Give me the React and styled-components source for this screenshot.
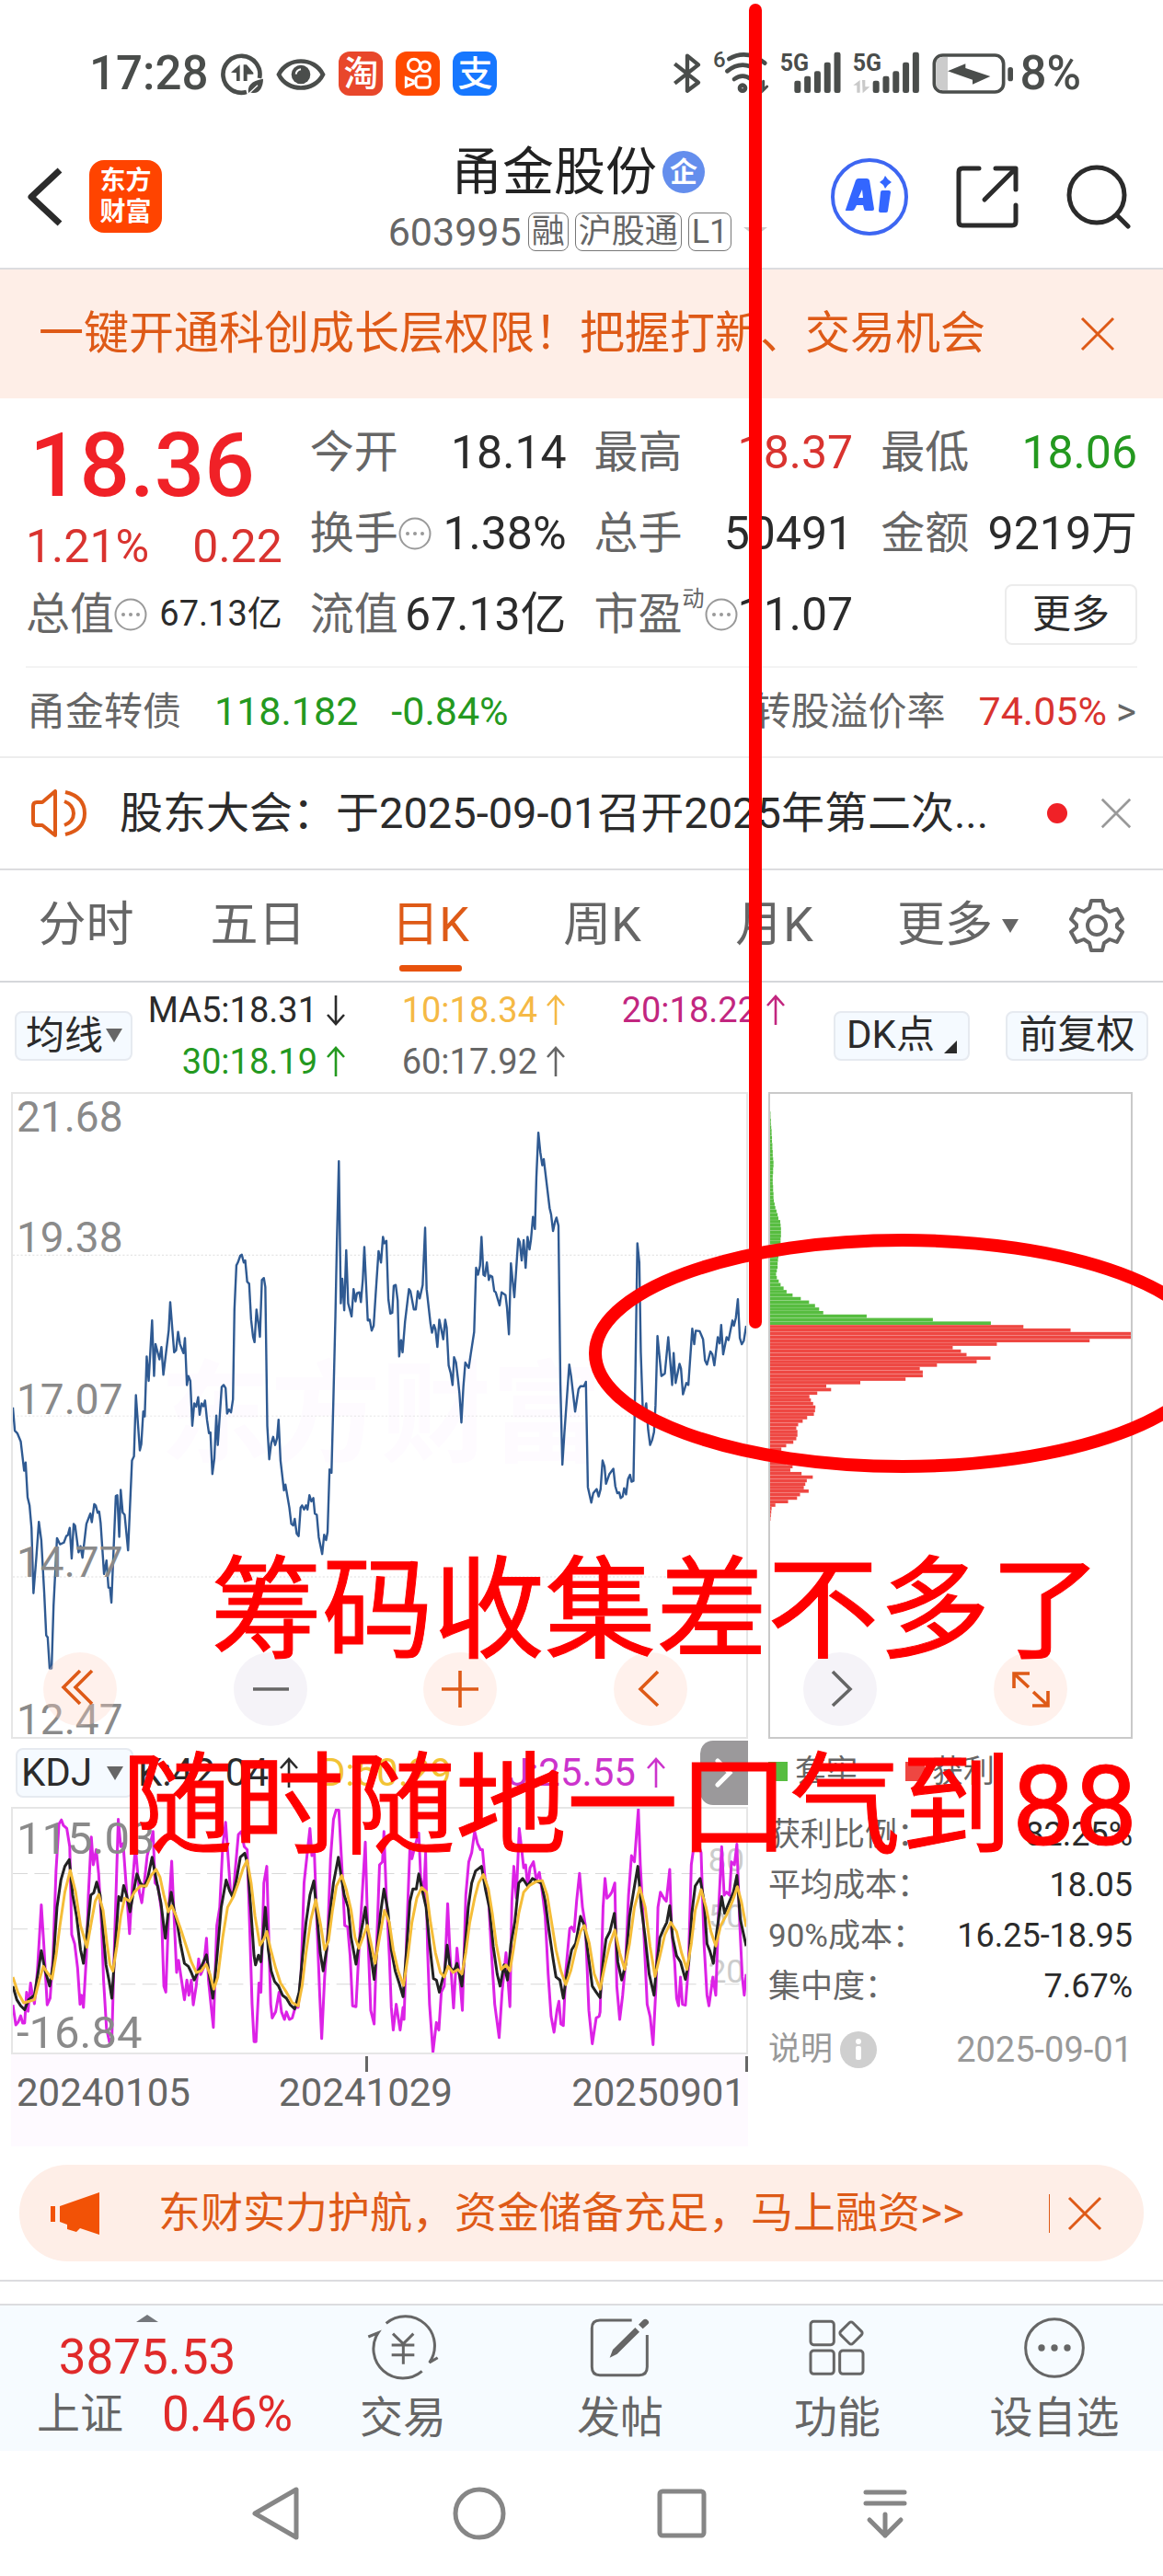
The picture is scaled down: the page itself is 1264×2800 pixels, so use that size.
import React from "react";
import styled, { createGlobalStyle } from "styled-components";

const INK = "#2b2b2b";
const GREY = "#666";
const RED = "#d9332f";
const BRIGHT_RED = "#f02127";
const GREEN = "#24991f";
const ORANGE = "#de5a17";
const LINE = "#dcdcdf";
const PEACH = "#feeee7";
const SANS = `Roboto, "Noto Sans CJK SC", sans-serif`;

const GlobalStyle = createGlobalStyle`
  * { box-sizing: border-box; }
  body { margin: 0; background: #fff; font-family: ${SANS}; line-height: 1.2; color: ${INK}; }
  button, select { font: inherit; color: inherit; border: 0; background: none; padding: 0; margin: 0; }
  a { color: inherit; text-decoration: none; }
  p, h1, dl, dd, dt { margin: 0; font-weight: 400; }
  svg { display: block; flex: none; }
`;

const Page = styled.div`
  position: relative;
  overflow: hidden;
  white-space: nowrap;
`;

/* ---------- status bar ---------- */
const StatusBar = styled.div`
  display: flex;
  align-items: center;
  justify-content: space-between;
  height: 112px;
  padding: 48px 89px 0 97px;
  color: #4a4d4b;
  font-size: 51px;
  font-weight: 500;
  line-height: 64px;
  svg { overflow: visible; }
`;
const StatusGroup = styled.div`
  display: flex;
  align-items: center;
  gap: ${(p) => p.$gap}px;
`;
const AppBadge = styled.span`
  display: grid;
  place-items: center;
  width: 48px;
  height: 48px;
  border-radius: 12px;
  background: ${(p) => p.$bg};
  color: #fff;
  font-size: 38px;
  line-height: 48px;
`;

/* ---------- header ---------- */
const Header = styled.header`
  display: grid;
  grid-template-columns: 1fr auto 1fr;
  align-items: center;
  height: 181px;
  padding: 24px 35px 0 27px;
  border-bottom: 2px solid ${LINE};
`;
const HeaderSide = styled.div`
  display: flex;
  align-items: center;
  justify-content: ${(p) => (p.$end ? "flex-end" : "flex-start")};
  gap: ${(p) => (p.$end ? 52 : 28)}px;
`;
const IconButton = styled.button`
  display: grid;
  place-items: center;
  flex: none;
`;
const BrandLogo = styled.a`
  width: 79px;
  height: 79px;
  padding: 6px 0;
  border-radius: 16px;
  background: #ff4400;
  color: #fff;
  font-size: 28px;
  font-weight: 700;
  line-height: 34px;
  text-align: center;
  white-space: normal;
`;
const Titles = styled.div`
  padding-top: 11px;
`;
const StockName = styled.h1`
  display: flex;
  align-items: center;
  justify-content: center;
  gap: 6px;
  font-size: 56px;
  line-height: 66px;
  color: #222;
`;
const Round = styled.span`
  display: grid;
  place-items: center;
  width: 46px;
  height: 46px;
  border-radius: 50%;
  background: ${(p) => p.$bg};
  color: #fff;
  font-size: 30px;
  font-weight: 700;
  line-height: 46px;
`;
const CodeRow = styled.div`
  display: flex;
  align-items: center;
  justify-content: center;
  gap: 7px;
  font-size: 43px;
  line-height: 64px;
  color: ${GREY};
  svg { margin-left: 6px; }
`;
const Tag = styled.span`
  padding: 0 3px;
  border: 1px solid #777;
  border-radius: 8px;
  font-size: 36px;
  line-height: 40px;
`;

/* ---------- banner ---------- */
const Banner = styled.section`
  display: flex;
  align-items: center;
  justify-content: space-between;
  height: 140px;
  padding: 0 52px 0 42px;
  background: ${PEACH};
  color: ${ORANGE};
  font-size: 49px;
`;

/* ---------- quote ---------- */
const Quote = styled.section`
  display: grid;
  grid-template-columns: repeat(4, 1fr);
  grid-auto-rows: 88px;
  column-gap: 30px;
  margin: 0 28px;
  padding: 15px 0 12px;
  border-bottom: 2px solid #f3f3f3;
`;
const PriceBlock = styled.div`
  grid-row: span 2;
  color: ${BRIGHT_RED};
`;
const Price = styled.p`
  padding-left: 4px;
  font-size: 96px;
  font-weight: 500;
  line-height: 116px;
`;
const Change = styled.p`
  display: flex;
  justify-content: space-between;
  color: ${RED};
  font-size: 50px;
  line-height: 60px;
`;
const Cell = styled.div`
  display: flex;
  align-items: center;
  justify-content: space-between;
`;
const CellLabel = styled.span`
  display: flex;
  align-items: center;
  color: ${GREY};
  font-size: 48px;
`;
const Sup = styled.sup`
  align-self: flex-start;
  font-size: 24px;
  line-height: 24px;
`;
const CellValue = styled.span`
  color: ${(p) => p.$color || INK};
  font-size: ${(p) => (p.$small ? 38 : 50)}px;
`;
const MoreButton = styled.button`
  justify-self: end;
  align-self: center;
  width: 144px;
  height: 66px;
  border: 2px solid #ececec;
  border-radius: 8px;
  font-size: 42px;
`;

const BondRow = styled.a`
  display: flex;
  align-items: center;
  height: 98px;
  padding: 0 29px;
  border-bottom: 2px solid #ededed;
  color: ${GREY};
  font-size: 42px;
`;
const Num = styled.span`
  color: ${(p) => p.$color};
  font-size: 43px;
  margin-left: 36px;
`;
const Push = styled.span`
  margin-left: auto;
`;
const Arrow = styled.span`
  margin-left: 10px;
`;

const Notice = styled.section`
  display: flex;
  align-items: center;
  height: 122px;
  padding: 0 34px;
  border-bottom: 2px solid ${LINE};
  font-size: 47px;
`;
const NoticeText = styled.a`
  flex: 1;
  min-width: 0;
  margin: 0 45px 0 36px;
`;
const RedDot = styled.i`
  width: 22px;
  height: 22px;
  margin-right: 36px;
  border-radius: 50%;
  background: ${BRIGHT_RED};
`;

/* ---------- period tabs ---------- */
const Tabs = styled.nav`
  display: grid;
  grid-template-columns: repeat(5, 187fr) 212fr 90fr;
  align-items: center;
  height: 122px;
  padding-right: 27px;
  border-bottom: 2px solid #d5d7da;
  color: ${GREY};
`;
const Tab = styled.button`
  position: relative;
  display: flex;
  align-items: center;
  justify-content: center;
  gap: 10px;
  height: 120px;
  font-size: 52px;
  color: ${(p) => (p.$active ? ORANGE : GREY)};
  &::after {
    content: "";
    position: absolute;
    bottom: 10px;
    width: 68px;
    height: 7px;
    border-radius: 3px;
    background: ${(p) => (p.$active ? "#e8520c" : "transparent")};
  }
`;
const Caret = styled.i`
  width: 0;
  height: 0;
  border: 9px solid transparent;
  border-top: 15px solid ${GREY};
  border-bottom: 0;
  pointer-events: none;
`;

/* ---------- moving averages ---------- */
const MaBar = styled.section`
  display: flex;
  align-items: center;
  height: 119px;
  padding: 0 16px 4px;
`;
const SelectBox = styled.label`
  position: relative;
  display: flex;
  align-items: center;
  width: 128px;
  height: 54px;
  border: 2px solid #e6eaf0;
  border-radius: 8px;
  background: #f5faff;
  select {
    appearance: none;
    width: 100%;
    padding-left: ${(p) => p.$pad}px;
    font-size: 42px;
    line-height: 50px;
  }
  i {
    position: absolute;
    right: 9px;
  }
`;
const MaList = styled.div`
  display: grid;
  grid-template-columns: 231px 239px 239px;
  margin-right: auto;
  line-height: 56px;
`;
const MaItem = styled.span`
  display: flex;
  align-items: center;
  justify-content: flex-end;
  gap: 10px;
  color: ${(p) => p.$color};
  font-size: 38px;
`;
const PillButton = styled.button`
  display: flex;
  align-items: center;
  justify-content: center;
  width: ${(p) => p.$w}px;
  height: 54px;
  margin-left: 39px;
  border: 2px solid #e6eaf0;
  border-radius: 8px;
  background: #f5faff;
  font-size: 42px;
`;
const Corner = styled.i`
  align-self: flex-end;
  margin: 0 0 6px 10px;
  border-left: 14px solid transparent;
  border-bottom: 14px solid ${INK};
`;

/* ---------- charts ---------- */
const Charts = styled.section`
  position: relative;
  display: grid;
  grid-template-columns: 801fr 396fr;
  column-gap: 22px;
  padding: 0 33px 0 12px;
`;
const Plot = styled.div`
  position: relative;
  height: ${(p) => p.$h}px;
  border: 2px solid ${(p) => p.$line || "#e6e6e6"};
  > svg {
    position: relative;
    width: 100%;
    height: 100%;
  }
`;
const AxisLabel = styled.span`
  position: absolute;
  left: 4px;
  bottom: ${(p) => p.$bottom};
  color: #8a8a8a;
  font-size: ${(p) => (p.$large ? 49 : 46)}px;
  line-height: 36px;
`;
const LevelLabel = styled(AxisLabel)`
  left: auto;
  right: 2px;
  color: #ccc;
  font-size: 35px;
  line-height: 26px;
`;
const Watermark = styled.span`
  position: absolute;
  left: 160px;
  top: 280px;
  color: #fefbff;
  font-size: 120px;
  font-weight: 700;
  line-height: 140px;
`;
const KdjBar = styled.div`
  display: grid;
  grid-template-columns: 128px 198px 204px 1fr 52px;
  align-items: center;
  height: 74px;
  padding-left: 5px;
  font-size: 42px;
`;
const KdjValue = styled.span`
  display: flex;
  align-items: center;
  gap: 12px;
  padding-left: 5px;
  color: ${(p) => p.$color};
`;
const SideButton = styled.button`
  display: grid;
  place-items: center;
  height: 70px;
  border-radius: 14px 0 0 14px;
  background: #9b999b;
`;
const DateAxis = styled.div`
  position: relative;
  display: grid;
  grid-template-columns: 36% 1fr auto;
  height: 100px;
  padding: 17px 3px 0 6px;
  background: #fefaff;
  color: ${GREY};
  font-size: 42px;
  line-height: 50px;
`;
const Tick = styled.i`
  position: absolute;
  top: 2px;
  right: ${(p) => p.$right};
  width: 3px;
  height: 17px;
  background: ${GREY};
`;
const Legend = styled.div`
  display: flex;
  align-items: center;
  height: 70px;
  color: ${GREY};
  font-size: 34px;
`;
const Swatch = styled.i`
  width: 21px;
  height: 21px;
  margin: 0 8px 0 ${(p) => p.$left}px;
  background: ${(p) => p.$bg};
`;
const Facts = styled.dl`
  display: grid;
  grid-template-columns: auto 1fr;
  grid-auto-rows: 55px;
  padding-top: 7px;
  font-size: 35px;
  line-height: 55px;
  dt { color: ${GREY}; }
  dd { text-align: right; font-size: 36px; }
`;
const Footnote = styled.div`
  display: flex;
  align-items: center;
  gap: 8px;
  padding-top: 16px;
  color: #999;
  font-size: 35px;
  line-height: 50px;
`;
const FootDate = styled.span`
  margin-left: auto;
  font-size: 38px;
`;
const InfoButton = styled(IconButton)`
  width: 40px;
  height: 40px;
  border-radius: 50%;
  background: #cfcfcf;
`;
const FloatBar = styled.div`
  position: absolute;
  left: 47px;
  right: 104px;
  top: 609px;
  display: flex;
  justify-content: space-between;
`;
const FloatButton = styled(IconButton)`
  width: 80px;
  height: 80px;
  border-radius: 50%;
  background: ${(p) => (p.$grey ? "rgba(222,214,232,.3)" : "rgba(255,210,195,.32)")};
  color: ${(p) => (p.$grey ? GREY : ORANGE)};
`;

/* ---------- bottom ---------- */
const PromoWrap = styled.section`
  padding: 20px 21px 20px;
  border-bottom: 2px solid ${LINE};
`;
const Promo = styled.div`
  display: flex;
  align-items: center;
  height: 105px;
  padding: 0 45px 0 34px;
  border-radius: 52px;
  background: ${PEACH};
  color: ${ORANGE};
  font-size: 46px;
`;
const PromoLink = styled.a`
  margin: 0 auto 0 63px;
`;
const Bar = styled.i`
  width: 1px;
  height: 42px;
  margin-right: 19px;
  background: ${ORANGE};
`;
const TabBar = styled.nav`
  display: grid;
  grid-template-columns: 320fr repeat(4, 236fr);
  height: 160px;
  margin-top: 24px;
  border-top: 2px solid ${LINE};
  background: #f6fbff;
  color: ${GREY};
  font-size: 47px;
`;
const IndexLink = styled.a`
  display: flex;
  flex-direction: column;
  align-items: center;
  padding-top: 10px;
`;
const IndexUp = styled.i`
  margin-bottom: 8px;
  border: 12px solid transparent;
  border-top: 0;
  border-bottom: 8px solid #74777c;
`;
const IndexValue = styled.span`
  color: #e02a2a;
  font-size: 53px;
  line-height: 60px;
`;
const IndexRow = styled.span`
  display: flex;
  align-items: center;
  gap: 42px;
  padding: 2px 0 0 38px;
  line-height: 52px;
`;
const TabLink = styled.a`
  display: flex;
  flex-direction: column;
  align-items: center;
  padding-top: 10px;
  line-height: 72px;
  svg { margin-bottom: 4px; }
`;
const SystemNav = styled.nav`
  display: flex;
  align-items: center;
  justify-content: space-between;
  height: 136px;
  padding: 0 272px 0 270px;
  color: #868686;
`;

/* ---------- hand-drawn notes over the page ---------- */
const Marks = styled.svg`
  position: absolute;
  left: 0;
  top: 0;
  width: 100%;
  height: 1700px;
  pointer-events: none;
`;
const Note = styled.p`
  position: absolute;
  left: ${(p) => p.$x}px;
  top: ${(p) => p.$y}px;
  color: #f00;
  font-size: 121px;
  line-height: 140px;
  -webkit-text-stroke: 1px #f00;
  pointer-events: none;
`;

/* ---------- chart data ---------- */
const PRICE =
  "22,785 26,842 31,848 38,868 45,940 48,920 52,1005 56,1025 60,1080 64,1240 70,1150 75,1065 80,1110 86,1240 90,1343 93,1348 97,1424 101,1424 105,1270 112,1105 118,1120 126,1116 131,1100 134,1098 138,1080 142,1155 146,1070 149,1075 156,1140 160,1125 164,1153 172,1070 180,1045 183,1066 188,1022 191,1025 195,1043 198,1040 201,1068 208,1193 213,1160 217,1226 220,1227 223,1263 232,1002 235,1000 239,1102 242,987 246,1042 250,1048 257,1135 265,915 269,905 273,755 281,890 284,875 288,795 291,807 295,660 299,720 306,572 310,708 313,630 321,667 325,637 329,705 340,595 343,527 351,650 355,645 359,600 363,630 370,652 373,615 377,730 380,708 384,720 388,830 392,775 396,783 400,760 403,803 407,775 411,782 414,768 418,815 422,848 425,846 429,948 433,910 437,805 440,877 448,735 452,730 456,738 459,800 463,790 467,797 471,765 474,545 478,437 481,430 486,413 489,411 493,430 496,425 500,477 504,482 508,570 512,612 515,625 519,545 523,580 526,612 530,473 534,468 537,490 541,830 545,912 549,873 553,857 557,877 561,860 564,815 568,915 575,988 578,974 586,1030 590,1070 594,1074 597,1058 601,1094 605,1100 609,1030 612,1025 616,1035 620,1025 623,1035 627,1000 631,1015 635,1007 638,1045 642,1048 646,1103 653,1144 657,1097 661,1110 664,1090 668,937 672,945 676,760 680,560 683,380 687,182 691,530 694,470 698,547 702,400 706,530 713,562 717,495 721,525 724,505 729,503 732,527 736,470 739,392 746,572 750,570 754,597 758,585 762,510 768,402 773,430 777,367 780,383 784,377 788,520 792,555 796,553 799,487 803,485 807,523 810,660 814,620 817,650 822,575 830,495 833,500 840,545 844,545 848,500 852,518 858,485 863,345 866,495 874,580 877,602 881,583 884,593 888,637 892,570 900,618 904,570 907,590 911,682 915,700 919,730 922,662 926,675 930,715 933,750 937,822 941,735 945,675 952,688 956,655 963,600 967,443 971,460 975,438 978,367 982,460 985,463 989,430 993,473 996,462 1000,465 1004,500 1007,503 1015,535 1019,503 1027,510 1030,540 1034,606 1038,432 1045,515 1053,372 1056,380 1060,425 1064,375 1068,443 1072,367 1076,398 1079,373 1083,318 1087,348 1090,220 1094,112 1098,160 1102,192 1105,177 1117,297 1120,312 1124,353 1128,330 1131,320 1135,340 1139,730 1143,925 1147,850 1157,680 1161,710 1169,795 1176,740 1180,733 1187,733 1191,722 1195,980 1202,1018 1206,995 1213,985 1217,1003 1221,985 1225,915 1229,930 1232,972 1239,948 1247,935 1251,978 1255,995 1259,993 1262,1007 1266,1003 1269,983 1273,998 1277,960 1281,950 1284,967 1288,965 1292,700 1296,383 1300,430 1303,650 1307,790 1310,800 1314,775 1318,840 1322,877 1326,865 1330,845 1333,780 1337,610 1345,708 1352,702 1359,613 1367,730 1370,652 1374,725 1382,678 1385,690 1389,753 1396,725 1400,730 1408,592 1412,630 1415,597 1423,598 1430,618 1434,670 1438,680 1445,648 1449,655 1453,682 1460,613 1464,628 1467,583 1471,655 1478,613 1482,620 1490,572 1493,585 1497,565 1501,520 1505,615 1509,630 1513,622 1518,585";
const J_LINE =
  "22,962 28,1028 33,1018 38,998 42,1022 46,1022 50,920 53,983 58,890 62,930 66,958 72,850 80,632 85,760 92,962 98,940 104,800 110,520 116,365 121,352 125,370 132,380 138,440 142,730 148,760 154,840 159,960 162,930 166,970 172,800 176,600 182,408 186,500 192,450 197,530 203,700 207,880 213,1040 219,1085 224,1070 230,720 237,350 242,440 247,430 254,590 260,727 266,560 272,440 280,590 285,625 290,560 296,470 303,425 308,390 312,560 318,570 325,650 330,900 334,920 340,650 346,488 350,640 356,855 360,815 366,880 372,945 377,880 381,930 386,880 390,962 396,900 401,810 405,862 411,840 417,742 421,880 426,960 431,1036 438,700 444,640 450,440 456,360 460,450 466,590 472,590 476,510 482,400 488,390 494,440 500,450 505,700 510,960 514,1083 518,1083 524,890 528,920 534,560 540,505 545,800 548,960 551,1005 558,985 565,920 570,985 576,1010 580,985 586,1010 592,1005 598,970 604,970 610,860 616,560 622,470 628,380 632,470 637,460 642,680 648,930 652,1073 658,870 664,740 670,480 676,350 682,316 687,320 694,530 699,700 705,705 710,800 715,965 722,968 728,780 736,560 741,425 746,720 752,980 759,1025 764,770 770,500 776,490 779,390 784,610 790,800 794,970 798,1045 804,960 812,1045 818,970 820,1010 826,700 832,440 836,480 842,440 850,395 854,540 860,600 864,460 868,780 872,960 879,1118 886,1020 891,1045 896,920 902,900 909,628 914,800 921,972 928,775 933,860 939,980 946,600 952,490 958,460 964,390 970,430 976,450 980,450 985,540 992,600 998,780 1005,960 1014,1070 1020,920 1028,790 1036,968 1040,620 1044,505 1049,610 1055,380 1060,450 1064,510 1068,500 1072,570 1077,510 1084,490 1090,550 1096,525 1102,590 1108,670 1114,860 1120,1000 1126,1052 1132,980 1136,950 1140,1025 1145,1030 1150,850 1158,710 1162,705 1167,720 1172,620 1178,528 1184,640 1190,700 1197,980 1204,1090 1212,1005 1218,1000 1220,985 1226,640 1230,545 1234,610 1240,600 1244,590 1250,560 1254,900 1260,1010 1266,930 1272,820 1278,600 1284,470 1290,490 1298,316 1302,500 1308,680 1316,960 1322,1000 1328,1093 1334,900 1338,640 1343,590 1350,610 1355,620 1362,515 1366,720 1372,820 1376,940 1380,965 1384,870 1388,960 1394,963 1400,840 1406,500 1412,430 1420,430 1426,460 1432,760 1438,930 1442,965 1450,870 1456,930 1462,640 1468,440 1473,600 1478,590 1484,600 1488,490 1494,500 1499,432 1505,700 1510,870 1514,930 1518,860";
const K_LINE =
  "22,900 30,945 38,965 46,978 54,945 66,930 74,850 80,783 88,850 97,900 104,830 112,640 120,550 128,505 137,483 144,600 152,670 160,780 166,825 174,710 181,600 187,592 193,557 200,600 206,720 212,830 218,880 224,940 232,740 238,605 243,618 248,568 254,600 261,655 268,590 275,530 282,560 290,572 297,545 306,475 314,545 324,625 333,742 340,640 345,590 351,650 358,700 364,760 372,825 380,835 386,855 392,880 400,850 408,830 417,797 424,880 430,940 438,810 447,640 457,550 464,585 470,605 478,550 486,475 495,462 501,500 508,660 514,800 517,830 523,798 528,820 537,640 543,780 549,850 556,885 564,900 572,930 580,940 588,962 597,975 606,920 613,800 620,690 628,600 636,553 642,660 649,790 655,850 662,780 668,670 676,560 686,475 692,540 698,600 706,640 712,740 722,828 730,740 736,690 741,640 748,750 759,878 766,760 772,660 779,580 787,650 794,780 802,850 810,890 818,935 826,760 832,620 838,580 845,580 850,530 858,590 865,640 872,760 880,875 886,880 892,920 898,880 903,850 908,765 914,840 922,850 928,825 938,900 944,780 951,640 958,560 966,520 978,505 986,580 994,640 1002,770 1010,860 1016,900 1024,830 1031,880 1038,760 1046,690 1054,560 1062,545 1072,570 1082,545 1092,555 1100,560 1108,620 1116,720 1124,810 1130,870 1138,880 1145,940 1153,850 1162,780 1170,760 1180,670 1188,700 1196,800 1204,900 1212,920 1220,938 1226,820 1232,745 1240,720 1249,660 1256,820 1264,880 1272,830 1280,670 1288,590 1297,505 1304,640 1312,740 1320,860 1330,930 1336,820 1342,740 1350,710 1356,690 1362,635 1368,740 1376,800 1384,820 1394,878 1401,820 1407,660 1414,570 1424,545 1432,620 1438,760 1444,785 1451,825 1458,720 1468,605 1474,660 1484,620 1492,590 1499,535 1506,680 1518,768";
const D_LINE =
  "22,870 32,920 44,955 56,950 66,945 76,880 84,835 92,855 102,876 110,800 118,700 128,590 139,518 150,590 160,700 173,772 182,690 190,620 197,598 206,650 214,760 220,830 226,850 234,770 242,670 250,610 260,620 270,590 282,570 294,570 304,535 314,515 322,540 330,600 339,655 346,635 354,665 364,710 376,770 386,820 396,855 406,850 416,828 424,860 432,910 440,870 450,740 460,640 472,605 482,560 492,510 500,485 508,560 516,670 526,765 534,745 540,720 548,780 558,840 568,890 580,920 592,955 604,965 612,900 620,790 630,680 640,615 650,700 658,780 666,750 674,650 682,570 693,535 702,580 712,650 720,740 728,775 736,740 745,700 754,770 761,825 770,740 780,650 790,690 798,780 808,850 819,898 828,800 836,690 846,610 856,575 866,590 874,690 884,790 894,855 902,870 910,835 920,855 930,845 938,860 946,790 954,690 964,610 972,560 982,532 992,580 1000,660 1008,760 1018,845 1028,830 1036,850 1044,770 1054,660 1064,590 1076,568 1090,555 1102,552 1112,600 1120,680 1130,780 1140,850 1150,895 1160,850 1170,780 1180,720 1188,700 1198,760 1208,860 1220,910 1230,830 1240,760 1250,715 1260,790 1270,845 1280,760 1290,640 1301,575 1312,640 1322,770 1332,868 1342,800 1352,730 1364,690 1376,720 1386,790 1397,845 1406,760 1414,650 1426,582 1436,640 1446,720 1456,768 1466,700 1478,665 1490,620 1500,572 1508,620 1518,705";
const TRAPPED = [
  590, 435, 258, 142, 131, 120, 104, 82, 60, 44, 36, 28, 23, 18, 16, 18, 20, 20, 21, 22, 24, 26, 28, 28, 28, 29, 29, 29,
  28, 27, 22, 20, 17, 14, 12, 10, 9, 9, 8, 8, 7, 7, 7, 8, 8, 9, 9, 8, 7, 7, 6, 6, 5, 5, 4, 4, 3, 2, 2, 1, 1,
];
const PROFIT = [
  677, 803, 964, 964, 854, 606, 488, 510, 525, 589, 552, 446, 400, 408, 408, 362, 241, 150, 163, 126, 105, 109, 115, 121,
  120, 117, 99, 87, 75, 70, 73, 73, 70, 62, 43, 30, 24, 22, 22, 43, 60, 54, 84, 114, 98, 94, 90, 103, 80, 72, 48, 14, 4,
  3, 2, 1,
];
const BAR_STEP = 8.57;
const SPLIT_Y = 583;

/* ---------- icons ---------- */
const Close = ({ size = 38, color = "currentColor", width = 3 }) => (
  <svg width={size} height={size} viewBox="0 0 38 38" stroke={color} strokeWidth={width} fill="none">
    <path d="M2 2 36 36M36 2 2 36" />
  </svg>
);
const Dots = () => (
  <svg width="36" height="36" viewBox="0 0 36 36" fill="#999">
    <circle cx="18" cy="18" r="16.5" fill="none" stroke="#999" strokeWidth="2" />
    <circle cx="10" cy="18" r="2" />
    <circle cx="18" cy="18" r="2" />
    <circle cx="26" cy="18" r="2" />
  </svg>
);
const Trend = ({ down }) => (
  <svg width="20" height="34" viewBox="0 0 20 34" fill="none" stroke="currentColor" strokeWidth="2.6">
    {down ? <path d="M10 1V32M1 22 10 32 19 22" /> : <path d="M10 33V2M1 12 10 2 19 12" />}
  </svg>
);
const Signal = ({ data }) => (
  <svg width={data ? 72 : 66} height="48" viewBox={data ? "620 48 216 144" : "383 48 198 144"} fill="#4a4d4b">
    <text x={data ? 619 : 382} y="110" fontSize="75" fontWeight="700" fontFamily="Roboto, sans-serif">
      5G
    </text>
    {[0, 1, 2, 3, 4].map((i) => (
      <rect
        key={i}
        x={(data ? 685 : 429) + i * 32.4}
        y={[143, 128, 112, 83, 50][i]}
        width="21"
        height={183 - [143, 128, 112, 83, 50][i]}
        rx="7"
      />
    ))}
    {data && <path fill="#c9c9c9" d="M621 158 643 141V182H633V158ZM650 141H660V163H675L652 184Z" />}
  </svg>
);

const floatIcons = [
  { name: "最早", d: "M40 20 22 38 40 56M53 20 35 38 53 56" },
  { name: "缩小", d: "M21 40H60", grey: true },
  { name: "放大", d: "M20 40H60M40 20V60" },
  { name: "左移", d: "M48 21 29 40 48 58" },
  { name: "右移", d: "M32 21 51 40 32 58", grey: true },
  { name: "全屏", d: "M22 39V23H39M22 23 38 38M59 42V58H42M59 58 43 43" },
];

const tabs = ["分时", "五日", "日K", "周K", "月K"];

const facts = [
  ["获利比例：", "82.25%"],
  ["平均成本：", "18.05"],
  ["90%成本：", "16.25-18.95"],
  ["集中度：", "7.67%"],
];

const Stat = ({ label, sup, info, value, color, small }) => (
  <Cell>
    <CellLabel>
      {label}
      {sup && <Sup>{sup}</Sup>}
      {info && <Dots />}
    </CellLabel>
    <CellValue $color={color} $small={small}>
      {value}
    </CellValue>
  </Cell>
);

const KdjPlot = () => (
  <svg viewBox="22 315 1496 804" preserveAspectRatio="none" fill="none">
    {[529, 712, 894].map((y) => (
      <path key={y} d={`M22 ${y}H1518`} stroke="#d8d8d8" strokeWidth="3" strokeDasharray="30 14" />
    ))}
    <g strokeLinejoin="round">
      <polyline points={J_LINE} stroke="#dc22e6" strokeWidth="3" vectorEffect="non-scaling-stroke" />
      <polyline points={K_LINE} stroke="#222" strokeWidth="3" vectorEffect="non-scaling-stroke" />
      <polyline points={D_LINE} stroke="#f5bd38" strokeWidth="3" vectorEffect="non-scaling-stroke" />
    </g>
  </svg>
);

export default function App() {
  return (
    <Page>
      <GlobalStyle />

      <StatusBar>
        <StatusGroup $gap={14}>
          <span>17:28</span>
          <svg width="46" height="48" viewBox="722 48 138 144" fill="#4a4d4b">
            <path d="M848 135A60 60 0 1 0 806 180" fill="none" stroke="#4a4d4b" strokeWidth="14" />
            <path d="M755 116 784 91V144H773V118ZM796 91H806L828 117V122H808V144H796Z" />
            <path d="M812 184C808 160 820 144 860 137C860 166 846 188 822 182Z" />
            <path d="M806 192 842 158" stroke="#fff" strokeWidth="4" />
          </svg>
          <svg width="54" height="48" viewBox="903 48 162 144">
            <path
              d="M912 123C940 65 1028 65 1056 123C1028 181 940 181 912 123Z"
              fill="none"
              stroke="#4a4d4b"
              strokeWidth="14"
            />
            <circle cx="984" cy="123" r="31" fill="#4a4d4b" />
            <path d="M968 122Q970 108 984 106" fill="none" stroke="#fff" strokeWidth="6" />
          </svg>
          <AppBadge $bg="#e8472b">淘</AppBadge>
          <AppBadge $bg="#ff4a00">
            <svg width="48" height="48" viewBox="1284 48 144 144" fill="none" stroke="#fff" strokeWidth="9">
              <circle cx="1344" cy="93" r="20" />
              <circle cx="1380" cy="97" r="16" />
              <rect x="1350" y="128" width="46" height="38" rx="12" />
              <path d="M1318 134 1342 144V152L1318 162Z" />
            </svg>
          </AppBadge>
          <AppBadge $bg="#1677ff">支</AppBadge>
        </StatusGroup>
        <StatusGroup $gap={13}>
          <svg width="30" height="48" viewBox="38 48 90 144" fill="none" stroke="#4a4d4b" strokeWidth="13">
            <path d="M42 88 119 149 83 176V62L119 91 42 152" strokeLinejoin="round" />
          </svg>
          <svg width="60" height="48" viewBox="166 48 180 144" fill="none" stroke="#4a4d4b" strokeWidth="14" strokeLinecap="round">
            <text x="166" y="100" fontSize="72" fontWeight="500" fill="#4a4d4b" stroke="none" fontFamily="Roboto, sans-serif">
              6
            </text>
            <path d="M218 72Q275 38 335 86M212 112Q262 72 314 112M235 138Q262 118 290 138" />
            <circle cx="262" cy="167" r="9" />
            <path d="M310 140V176M330 145V174L342 162" strokeWidth="9" />
          </svg>
          <Signal />
          <Signal data />
          <StatusGroup $gap={6}>
            <svg width="90" height="48" viewBox="882 42 270 144">
              <rect x="892" y="54" width="226" height="120" rx="28" fill="#fff" stroke="#4a4d4b" strokeWidth="11" />
              <path d="M920 60H936V168H920Q898 168 898 146V82Q898 60 920 60Z" fill="#ccc" />
              <path d="M936 106 994 82V96L1075 123 1017 149V134Z" fill="#4a4d4b" />
              <rect x="1132" y="93" width="17" height="46" rx="8" fill="#4a4d4b" />
            </svg>
            <span>8%</span>
          </StatusGroup>
        </StatusGroup>
      </StatusBar>

      <Header>
        <HeaderSide>
          <IconButton aria-label="返回">
            <svg width="42" height="66" viewBox="0 0 42 66" fill="none" stroke="#2b2b2b" strokeWidth="7" strokeLinejoin="round">
              <path d="M38 4 7 33 38 62" />
            </svg>
          </IconButton>
          <BrandLogo href="#home">
            东方
            <br />
            财富
          </BrandLogo>
        </HeaderSide>
        <Titles>
          <StockName>
            甬金股份<Round $bg="#648eed">企</Round>
          </StockName>
          <CodeRow>
            603995<Tag>融</Tag>
            <Tag>沪股通</Tag>
            <Tag>L1</Tag>
            <svg width="26" height="10" viewBox="0 0 26 10" fill="#ccc">
              <path d="M0 0H26L13 10Z" />
            </svg>
          </CodeRow>
        </Titles>
        <HeaderSide $end>
          <IconButton aria-label="AI 助手">
            <svg width="84" height="84" viewBox="0 0 84 84">
              <circle cx="42" cy="42" r="40" fill="none" stroke="#3d66f2" strokeWidth="4" />
              <path
                fill="#3366ff"
                fillRule="evenodd"
                d="M16 56 27 24Q28 22 30 22H39Q41 22 42 24L47 55Q47 57 45 57H38Q36 57 36 55L35 51H28L26 55Q25 57 23 57H17Q15 57 16 56ZM30 43H35L34 34Z"
              />
              <path
                fill="#3366ff"
                d="M56 35H63Q65 35 65 37L62 57Q62 59 60 59H54Q52 59 52 57L54 37Q54 35 56 35ZM59 19 62 23 66 26 62 29 59 33 57 29 53 26 57 23Z"
              />
            </svg>
          </IconButton>
          <IconButton aria-label="分享">
            <svg width="68" height="68" viewBox="0 0 68 68" fill="none" stroke="#2b2b2b" strokeWidth="5" strokeLinecap="round" strokeLinejoin="round">
              <path d="M25 3H7Q3 3 3 7V61Q3 65 7 65H61Q65 65 65 61V43M43 3H65V26M64 4 31 37" />
            </svg>
          </IconButton>
          <IconButton aria-label="搜索">
            <svg width="70" height="70" viewBox="0 0 70 70" fill="none" stroke="#2b2b2b" strokeWidth="5" strokeLinecap="round">
              <circle cx="33" cy="33" r="30" />
              <path d="M55 55 67 67" />
            </svg>
          </IconButton>
        </HeaderSide>
      </Header>

      <Banner>
        <a href="#open">一键开通科创成长层权限！把握打新、交易机会</a>
        <IconButton aria-label="关闭">
          <Close />
        </IconButton>
      </Banner>

      <Quote>
        <PriceBlock>
          <Price>18.36</Price>
          <Change>
            <span>1.21%</span>
            <span>0.22</span>
          </Change>
        </PriceBlock>
        <Stat label="今开" value="18.14" />
        <Stat label="最高" value="18.37" color={RED} />
        <Stat label="最低" value="18.06" color={GREEN} />
        <Stat label="换手" info value="1.38%" />
        <Stat label="总手" value="50491" />
        <Stat label="金额" value="9219万" />
        <Stat label="总值" info value="67.13亿" small />
        <Stat label="流值" value="67.13亿" />
        <Stat label="市盈" sup="动" info value="11.07" />
        <MoreButton>更多</MoreButton>
      </Quote>

      <BondRow href="#bond">
        甬金转债
        <Num $color={GREEN}>118.182</Num>
        <Num $color={GREEN}>-0.84%</Num>
        <Push>转股溢价率</Push>
        <Num $color={RED}>74.05%</Num>
        <Arrow>&gt;</Arrow>
      </BondRow>

      <Notice>
        <svg width="60" height="52" viewBox="0 0 60 52" fill="none" stroke={ORANGE} strokeWidth="4" strokeLinejoin="round">
          <path d="M2 18Q2 14 6 14H12L26 2V50L12 39H6Q2 39 2 35Z" />
          <path d="M36 13Q46 17 46 26T36 39M37 3Q58 8 58 26T37 49" />
        </svg>
        <NoticeText href="#notice">股东大会：于2025-09-01召开2025年第二次...</NoticeText>
        <RedDot />
        <IconButton aria-label="关闭公告">
          <Close size={34} color="#999" />
        </IconButton>
      </Notice>

      <Tabs>
        {tabs.map((t) => (
          <Tab key={t} $active={t === "日K"}>
            {t}
          </Tab>
        ))}
        <Tab aria-haspopup="menu">
          更多
          <Caret />
        </Tab>
        <IconButton aria-label="设置">
          <svg width="60" height="60" viewBox="0 0 60 60" fill="none" stroke={GREY} strokeWidth="4" strokeLinejoin="round">
            <path d="M24 3H36L38 11 44 15 52 12 58 23 52 29V32L58 37 52 48 44 45 38 49 36 57H24L22 49 16 45 8 48 2 37 8 32V29L2 23 8 12 16 15 22 11Z" />
            <circle cx="30" cy="30" r="10" />
          </svg>
        </IconButton>
      </Tabs>

      <MaBar>
        <SelectBox $pad={10}>
          <select aria-label="主图指标">
            <option>均线</option>
          </select>
          <Caret />
        </SelectBox>
        <MaList>
          <MaItem $color={INK}>
            MA5:18.31
            <Trend down />
          </MaItem>
          <MaItem $color="#f5b945">
            10:18.34
            <Trend />
          </MaItem>
          <MaItem $color="#c2267f">
            20:18.22
            <Trend />
          </MaItem>
          <MaItem $color={GREEN}>
            30:18.19
            <Trend />
          </MaItem>
          <MaItem $color={GREY}>
            60:17.92
            <Trend />
          </MaItem>
        </MaList>
        <PillButton $w={148}>
          DK点
          <Corner />
        </PillButton>
        <PillButton $w={155}>前复权</PillButton>
      </MaBar>

      <Charts>
        <div>
          <Plot $h={703}>
            <Watermark>东方财富</Watermark>
            <svg viewBox="22 17 1496 1575" preserveAspectRatio="none" fill="none">
              {[412, 806, 1200].map((y) => (
                <path key={y} d={`M22 ${y}H1518`} stroke="#ddd" strokeWidth="2" strokeDasharray="4 4" />
              ))}
              <polyline
                points={PRICE}
                stroke="#2f5a92"
                strokeWidth="2.4"
                strokeLinejoin="round"
                vectorEffect="non-scaling-stroke"
              />
            </svg>
            <AxisLabel $bottom="656px">21.68</AxisLabel>
            <AxisLabel $bottom="525px">19.38</AxisLabel>
            <AxisLabel $bottom="349px">17.07</AxisLabel>
            <AxisLabel $bottom="172px">14.77</AxisLabel>
            <AxisLabel $bottom="1px">12.47</AxisLabel>
          </Plot>
          <KdjBar>
            <SelectBox $pad={4}>
              <select aria-label="副图指标">
                <option>KDJ</option>
              </select>
              <Caret />
            </SelectBox>
            <KdjValue $color={INK}>
              K:42.04
              <Trend />
            </KdjValue>
            <KdjValue $color="#f2c335">D:50.29</KdjValue>
            <KdjValue $color="#cc33cc">
              J:25.55
              <Trend />
            </KdjValue>
            <SideButton aria-label="展开">
              <svg width="20" height="34" viewBox="0 0 20 34" fill="none" stroke="#fff" strokeWidth="5" strokeLinecap="round">
                <path d="M3 4 16 17 3 30" />
              </svg>
            </SideButton>
          </KdjBar>
          <Plot $h={269}>
            <LevelLabel $bottom="195px">80</LevelLabel>
            <LevelLabel $bottom="134px">50</LevelLabel>
            <LevelLabel $bottom="74px">20</LevelLabel>
            <KdjPlot />
            <AxisLabel $large $bottom="214px">115.03</AxisLabel>
            <AxisLabel $large $bottom="3px">-16.84</AxisLabel>
          </Plot>
          <DateAxis>
            <Tick $right="413px" />
            <Tick $right="0" />
            <span>20240105</span>
            <span>20241029</span>
            <span>20250901</span>
          </DateAxis>
        </div>

        <div>
          <Plot $h={703} $line="#c9c9c9">
            <svg viewBox="524 17 964 1575" preserveAspectRatio="none">
              {TRAPPED.map((w, i) => (
                <rect key={i} x="524" y={SPLIT_Y - (i + 1) * BAR_STEP} width={w} height="8.2" fill="#57bd40" />
              ))}
              {PROFIT.map((w, i) => (
                <rect key={i} x="524" y={SPLIT_Y + i * BAR_STEP} width={w} height="8.2" fill="#ee4742" />
              ))}
            </svg>
          </Plot>
          <Legend>
            <Swatch $bg="#57bd40" $left={0} />
            套牢
            <Swatch $bg="#ee4742" $left={52} />
            获利
          </Legend>
          <Facts>
            {facts.map(([k, v]) => (
              <React.Fragment key={k}>
                <dt>{k}</dt>
                <dd>{v}</dd>
              </React.Fragment>
            ))}
          </Facts>
          <Footnote>
            说明
            <InfoButton aria-label="说明">
              <svg width="8" height="24" viewBox="0 0 8 24" fill="#fff">
                <circle cx="4" cy="3" r="3" />
                <rect x="1" y="8" width="6" height="15" rx="2" />
              </svg>
            </InfoButton>
            <FootDate>2025-09-01</FootDate>
          </Footnote>
        </div>

        <FloatBar>
          {floatIcons.map((f) => (
            <FloatButton key={f.name} aria-label={f.name} $grey={f.grey}>
              <svg width="80" height="80" viewBox="0 0 80 80" fill="none" stroke="currentColor" strokeWidth="3.6">
                <path d={f.d} />
              </svg>
            </FloatButton>
          ))}
        </FloatBar>
      </Charts>

      <PromoWrap>
        <Promo>
          <svg width="54" height="46" viewBox="0 0 54 46" fill="#f25206">
            <path d="M0 15H5V32H0ZM10 15 53 0V46L32 39 28 43 18 40V35L10 32Z" />
          </svg>
          <PromoLink href="#promo">东财实力护航，资金储备充足，马上融资&gt;&gt;</PromoLink>
          <Bar />
          <IconButton aria-label="关闭推广">
            <Close />
          </IconButton>
        </Promo>
      </PromoWrap>

      <TabBar>
        <IndexLink href="#index">
          <IndexUp />
          <IndexValue>3875.53</IndexValue>
          <IndexRow>
            上证<IndexValue>0.46%</IndexValue>
          </IndexRow>
        </IndexLink>
        <TabLink href="#trade">
          <svg width="78" height="72" viewBox="118 48 234 216" fill="none" stroke={GREY} strokeWidth="9">
            <path d="M180 76A96 96 0 0 1 321 204L348 188M297 232A96 96 0 0 1 154 107L122 120" />
            <path d="M202 110 236 143 269 110M198 147H272M198 179H272M236 143V209" />
          </svg>
          交易
        </TabLink>
        <TabLink href="#post">
          <svg width="72" height="72" viewBox="836 48 216 216" fill="none" stroke={GREY} strokeWidth="9">
            <path d="M982 66H878Q852 66 852 92V218Q852 245 878 245H1006Q1032 245 1032 218V114" />
            <path fill={GREY} stroke="none" d="M910 188 920 162 993 90 1007 104 934 176ZM1004 80 1018 66Q1026 58 1034 66T1033 80L1018 94Z" />
          </svg>
          发帖
        </TabLink>
        <TabLink href="#tools">
          <svg width="72" height="72" viewBox="44 48 216 216" fill="none" stroke={GREY} strokeWidth="9">
            <rect x="65" y="70" width="76" height="76" rx="10" />
            <rect x="65" y="165" width="76" height="76" rx="10" />
            <rect x="160" y="165" width="76" height="76" rx="10" />
            <rect x="169" y="80" width="56" height="56" rx="8" transform="rotate(45 197 108)" />
          </svg>
          功能
        </TabLink>
        <TabLink href="#watch">
          <svg width="72" height="72" viewBox="750 48 216 216" fill={GREY}>
            <circle cx="858" cy="156" r="94" fill="none" stroke={GREY} strokeWidth="9" />
            <circle cx="816" cy="156" r="11" />
            <circle cx="858" cy="156" r="11" />
            <circle cx="900" cy="156" r="11" />
          </svg>
          设自选
        </TabLink>
      </TabBar>

      <SystemNav>
        <IconButton aria-label="后退">
          <svg width="60" height="60" viewBox="0 0 60 60" fill="none" stroke="currentColor" strokeWidth="5" strokeLinejoin="round">
            <path d="M52 4V56L7 30Z" />
          </svg>
        </IconButton>
        <IconButton aria-label="主页">
          <svg width="60" height="60" viewBox="0 0 60 60" fill="none" stroke="currentColor" strokeWidth="5">
            <circle cx="30" cy="30" r="26" />
          </svg>
        </IconButton>
        <IconButton aria-label="最近任务">
          <svg width="60" height="60" viewBox="0 0 60 60" fill="none" stroke="currentColor" strokeWidth="5">
            <rect x="6" y="6" width="48" height="48" rx="3" />
          </svg>
        </IconButton>
        <IconButton aria-label="下拉通知">
          <svg width="60" height="60" viewBox="0 0 60 60" fill="none" stroke="currentColor" strokeWidth="5" strokeLinecap="round" strokeLinejoin="round">
            <path d="M9 7H51M9 19H51M30 31V54M13 37 30 54 47 37" />
          </svg>
        </IconButton>
      </SystemNav>

      <Marks fill="none" stroke="#f00" strokeWidth="14" aria-hidden="true">
        <path d="M821 11V1437" strokeLinecap="round" />
        <ellipse cx="981" cy="1471" rx="334" ry="123" />
      </Marks>
      <Note $x={229} $y={1681}>筹码收集差不多了</Note>
      <Note $x={132} $y={1894}>随时随地一口气到88</Note>
    </Page>
  );
}
